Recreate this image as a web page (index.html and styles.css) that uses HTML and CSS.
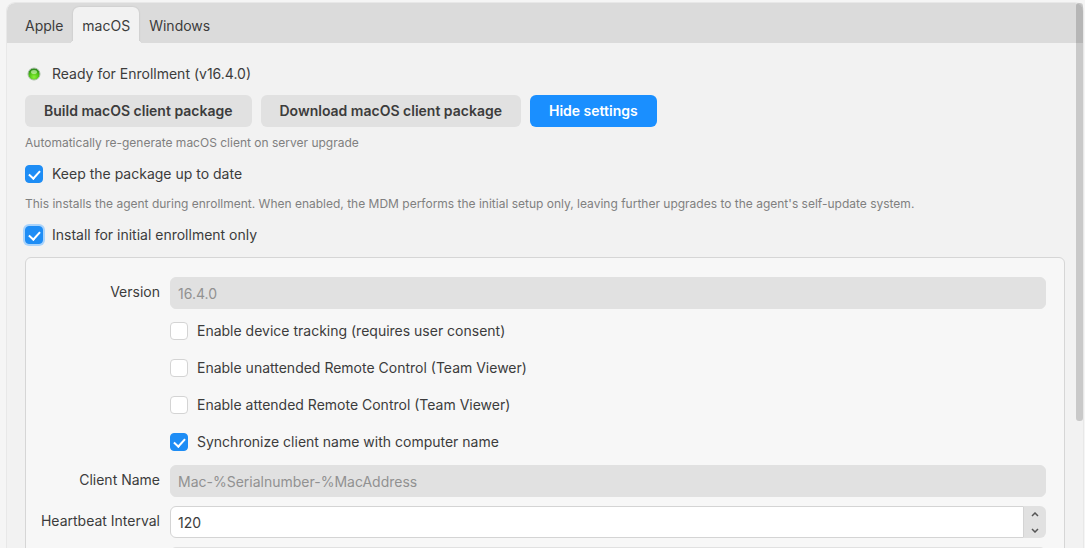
FILE: index.html
```html
<!DOCTYPE html>
<html lang="en">
	<head>
		<meta charset="UTF-8" />
		<meta name="viewport" content="width=device-width, initial-scale=1.0" />
		<title>Enrollment</title>
		<link rel="stylesheet" href="styles.css">
	</head>
	<body>
		<main class="card">
			<nav class="tabs" role="tablist">
				<button class="tab" type="button" role="tab">Apple</button>
				<button class="tab active" type="button" role="tab" aria-selected="true">macOS</button>
				<button class="tab" type="button" role="tab">Windows</button>
			</nav>

			<form class="content">
				<div class="status">
					<svg class="led" viewBox="0 0 14 14" aria-hidden="true">
						<defs>
							<radialGradient id="led-fill" cx="50%" cy="75%" r="65%">
								<stop offset="0" stop-color="#8cf03c" />
								<stop offset="0.6" stop-color="#4fc414" />
								<stop offset="1" stop-color="#2c8a1c" />
							</radialGradient>
						</defs>
						<circle cx="7" cy="7" r="6" fill="url(#led-fill)" stroke="#a9bda6" stroke-width="1" />
						<ellipse cx="7" cy="5" rx="3" ry="2" fill="#d8f8c4" opacity="0.6" />
					</svg>
					<span>Ready for Enrollment (v16.4.0)</span>
				</div>

				<div class="buttons">
					<button class="btn" type="button">Build macOS client package</button>
					<button class="btn" type="button">Download macOS client package</button>
					<button class="btn primary" type="button">Hide settings</button>
				</div>

				<p class="hint">Automatically re-generate macOS client on server upgrade</p>
				<label class="check"><input type="checkbox" checked /> Keep the package up to date</label>
				<p class="hint">This installs the agent during enrollment. When enabled, the MDM performs the initial setup only, leaving further upgrades to the agent's self-update system.</p>
				<label class="check"><input class="focused" type="checkbox" checked /> Install for initial enrollment only</label>

				<div class="settings">
					<label class="name" for="version">Version</label>
					<input class="field" id="version" type="text" value="16.4.0" disabled />

					<div class="options">
						<label class="check"><input type="checkbox" /> Enable device tracking (requires user consent)</label>
						<label class="check"><input type="checkbox" /> Enable unattended Remote Control (Team Viewer)</label>
						<label class="check"><input type="checkbox" /> Enable attended Remote Control (Team Viewer)</label>
						<label class="check"><input type="checkbox" checked /> Synchronize client name with computer name</label>
					</div>

					<label class="name" for="client_name">Client Name</label>
					<input class="field" id="client_name" type="text" value="Mac-%Serialnumber-%MacAddress" disabled />

					<label class="name" for="heartbeat">Heartbeat Interval</label>
					<div class="spinner">
						<input class="field" id="heartbeat" type="text" inputmode="numeric" value="120" />
						<div class="steps">
							<button type="button" aria-label="Increase">
								<svg viewBox="0 0 8 5"><path d="M1 4 L4 1 L7 4" /></svg>
							</button>
							<button type="button" aria-label="Decrease">
								<svg viewBox="0 0 8 5"><path d="M1 1 L4 4 L7 1" /></svg>
							</button>
						</div>
					</div>

					<input class="field last" type="text" aria-label="Group" disabled />
				</div>
			</form>
		</main>
		<div class="scroll-thumb"></div>
	</body>
</html>
```
FILE: styles.css
```css
* {
	box-sizing: border-box;
}

body {
	margin: 0;
	height: 100vh;
	padding: 3px 2px 0 7px;
	overflow: hidden;
	background: #f5f5f5;
	color: #3c3c3c;
	font: 14px/20px Inter, 'Liberation Sans', sans-serif;
}

button,
input {
	font: inherit;
	color: inherit;
	margin: 0;
}

.card {
	height: 100%;
	overflow: hidden;
	background: #f2f2f2;
	border-radius: 8px 8px 0 0;
	box-shadow: 0 0 0 1px #e8e8e8;
}

/* tabs */
.tabs {
	display: flex;
	gap: 1px;
	height: 40px;
	padding: 4px 9px 0;
	background: #dbdbdb;
	border-radius: 8px 8px 0 0;
}

.tab {
	position: relative;
	padding: 1px 9px 0;
	border: 0;
	border-radius: 6px 6px 0 0;
	background: none;
}

.tab.active {
	background: #f2f2f2;
	box-shadow: 0 0 2px rgba(0, 0, 0, 0.15);
	clip-path: inset(-3px -5px 0);
}

/* curved feet of the active tab */
.tab.active::before,
.tab.active::after {
	content: '';
	position: absolute;
	bottom: 0;
	width: 4px;
	height: 4px;
}

.tab.active::before {
	right: 100%;
	background: radial-gradient(circle at 0 0, transparent 4px, #f2f2f2 4px);
}

.tab.active::after {
	left: 100%;
	background: radial-gradient(circle at 100% 0, transparent 4px, #f2f2f2 4px);
}

/* content */
.content {
	display: flex;
	flex-direction: column;
	padding: 21px 18px;
}

.status {
	display: flex;
	align-items: center;
	gap: 11px;
	padding-left: 2px;
}

.led {
	width: 14px;
	height: 14px;
}

.buttons {
	display: flex;
	gap: 9px;
	margin: 11px 0 8px;
}

.btn {
	height: 32px;
	padding: 0 19px;
	border: 0;
	border-radius: 6px;
	background: #e1e1e1;
	font-weight: 600;
}

.btn.primary {
	background: #1a8fff;
	color: #fff;
}

.hint {
	margin: 0;
	color: #808080;
	font-size: 12px;
	line-height: 16px;
}

.check {
	display: flex;
	align-items: center;
	gap: 9px;
}

.content > .check {
	margin: 13px 0 12px;
}

.check input {
	appearance: none;
	flex: none;
	width: 18px;
	height: 18px;
	border: 1px solid #d4d4d4;
	border-radius: 4px;
	background: #fff;
}

.check input:checked {
	border-color: #1e8df5;
	background: #1e8df5;
}

.check input:checked::before {
	content: '';
	display: block;
	width: 5px;
	height: 9px;
	margin: 2px 0 0 5px;
	border: solid #fff;
	border-width: 0 2px 2px 0;
	transform: rotate(42deg);
}

.check input.focused {
	box-shadow: 0 0 0 2px #a9d3fb;
}

/* settings panel */
.settings {
	display: grid;
	grid-template-columns: 134px 1fr;
	gap: 9px 10px;
	padding: 19px 18px 18px 0;
	border: 1px solid #d6d6d6;
	border-radius: 6px;
	background: #f7f7f7;
}

.name {
	padding-top: 5px;
	text-align: right;
}

.field {
	width: 100%;
	height: 32px;
	padding: 0 7px;
	border: 1px solid #d4d4d4;
	border-radius: 6px;
	background: #fff;
}

.field:disabled {
	border-color: #e1e1e1;
	background: #e1e1e1;
	color: #919191;
}

.options {
	grid-column: 2;
	display: flex;
	flex-direction: column;
	gap: 17px;
	padding: 3px 0 4px;
}

.spinner {
	display: flex;
}

.spinner .field {
	border-radius: 6px 0 0 6px;
}

.steps {
	flex: none;
	display: flex;
	flex-direction: column;
	width: 22px;
	border-radius: 0 6px 6px 0;
	background: #e1e1e1;
}

.steps button {
	flex: 1;
	display: flex;
	align-items: center;
	justify-content: center;
	padding: 0;
	border: 0;
	background: none;
}

.steps svg {
	width: 8px;
	height: 5px;
	fill: none;
	stroke: #555;
	stroke-width: 1.5;
}

.last {
	grid-column: 2;
}

.scroll-thumb {
	position: absolute;
	top: 3px;
	right: 2px;
	width: 7px;
	height: 418px;
	border-radius: 3px;
	background: rgba(0, 0, 0, 0.17);
}
```
